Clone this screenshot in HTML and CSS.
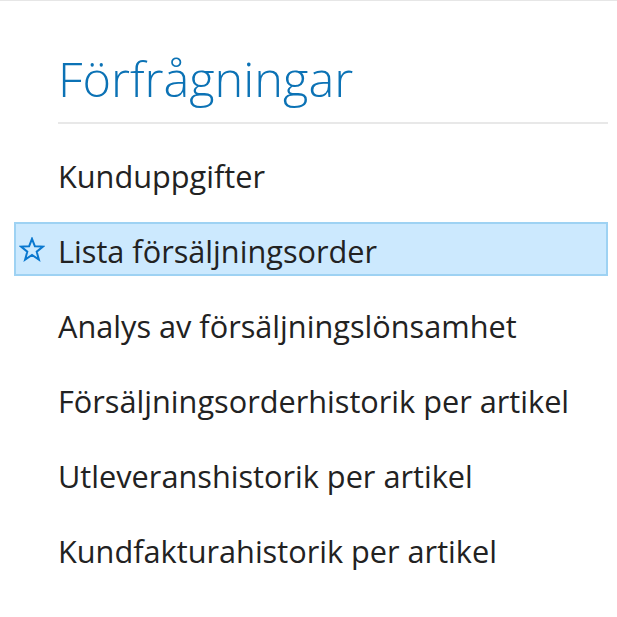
FILE: index.html
```html
<!DOCTYPE html>
<html lang="sv">
<head>
<meta charset="utf-8">
<title>Förfrågningar</title>
<link rel="stylesheet" href="styles.css">
</head>
<body>
<div class="page">
  <h1 class="title">Förfrågningar</h1>
  <ul class="menu">
    <li class="item"><span class="icon"></span><span class="label">Kunduppgifter</span></li>
    <li class="item active"><span class="icon"><svg width="26" height="25" viewBox="0 0 26 25"><polygon points="13,1.8 15.9,9.3 24,9.6 17.7,14.7 19.9,22.6 13,18 6.1,22.6 8.3,14.7 2,9.6 10.1,9.3" fill="none" stroke="#0a78cf" stroke-width="2" stroke-linejoin="miter"/></svg></span><span class="label">Lista försäljningsorder</span></li>
    <li class="item"><span class="icon"></span><span class="label">Analys av försäljningslönsamhet</span></li>
    <li class="item"><span class="icon"></span><span class="label">Försäljningsorderhistorik per artikel</span></li>
    <li class="item"><span class="icon"></span><span class="label">Utleveranshistorik per artikel</span></li>
    <li class="item"><span class="icon"></span><span class="label">Kundfakturahistorik per artikel</span></li>
  </ul>
</div>
</body>
</html>
```
FILE: styles.css
```css
html, body {
  margin: 0;
  padding: 0;
  background: #ffffff;
}
body {
  font-family: "Open Sans", "Noto Sans", sans-serif;
  color: #222222;
}
.page {
  border-top: 1px solid #e6e6e6;
  padding: 0 9px 0 14px;
}
.title {
  margin: 44px 0 0 44px;
  padding: 0 0 11px 0;
  font-size: 48.7px;
  font-weight: 300;
  line-height: normal;
  color: #0b72b5;
  border-bottom: 2px solid #e8e8e8;
}
.menu {
  list-style: none;
  margin: 23px 0 0 0;
  padding: 0;
}
.item {
  box-sizing: border-box;
  height: 54px;
  margin-bottom: 21px;
  display: flex;
  align-items: center;
  border: 2px solid transparent;
  font-size: 30.7px;
  line-height: 1;
}
.item.active {
  background: #cce9fe;
  border-color: #9ed2f3;
}
.icon {
  width: 42px;
  flex: none;
  display: flex;
  align-items: center;
  padding-left: 3px;
  box-sizing: border-box;
}
.icon svg {
  display: block;
}
.label {
  padding-top: 5px;
}
```
